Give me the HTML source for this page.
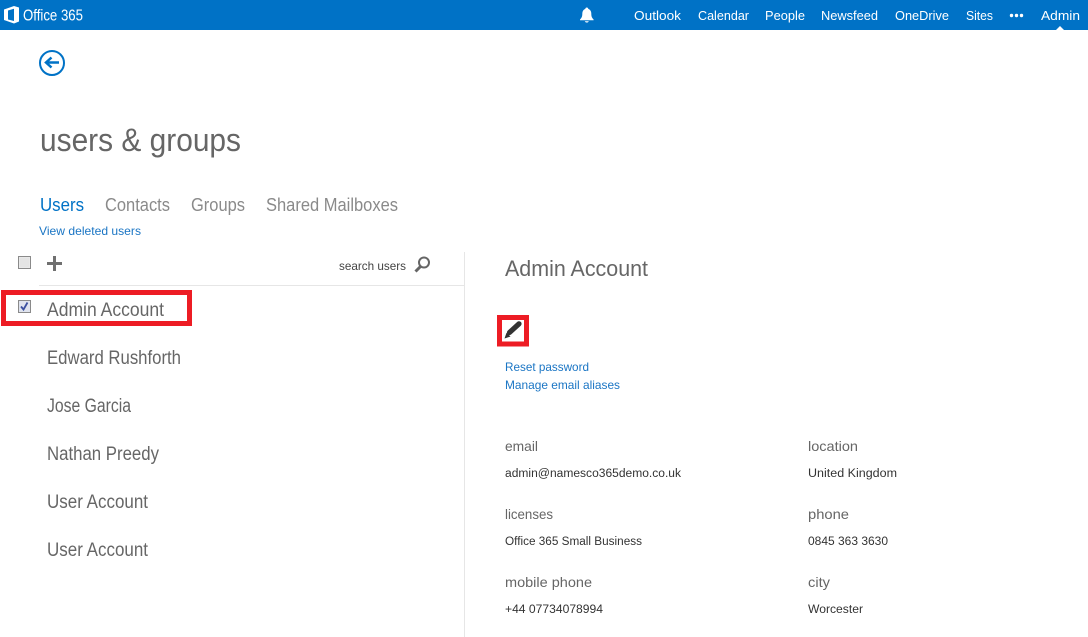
<!DOCTYPE html>
<html><head><meta charset="utf-8"><title>users &amp; groups</title>
<style>
html,body{margin:0;padding:0;background:#fff;width:1088px;height:637px;overflow:hidden}
svg{display:block}
text{font-family:"Liberation Sans",sans-serif}
.n{fill:#fff;font-size:13px}
.u{fill:#8a8a8a;font-size:18px}
.t{fill:#666;font-size:19px}
.l{fill:#1a75c4;font-size:12px}
.h{fill:#666;font-size:14px}
.v{fill:#333;font-size:11.5px}
</style></head><body>
<svg width="1088" height="637" viewBox="0 0 1088 637" xmlns="http://www.w3.org/2000/svg">
<rect width="1088" height="30" fill="#0072c6"/>
<path fill-rule="evenodd" d="M4 9.500L14 6l5 1.500V21.500L14 23.500 4 20ZM8 10.500V19.500L14 21V8.800Z" fill="#fff"/>
<text x="23" y="20.500" fill="#fff" font-size="15.500" textLength="60" lengthAdjust="spacingAndGlyphs">Office 365</text>
<path d="M586.800 7.500c-.9 0-1.400.6-1.500 1.400-2 .7-3 2.500-3 5 0 3-1 4.300-2.300 5.600v.8h13.600v-.8c-1.300-1.300-2.300-2.600-2.300-5.600 0-2.500-1-4.300-3-5-.1-.8-.6-1.400-1.500-1.400zM584.800 21.200c.3.800 1.100 1.300 2 1.300s1.700-.5 2-1.300z" fill="#fff"/>
<text class="n" x="634" y="20" textLength="47" lengthAdjust="spacingAndGlyphs">Outlook</text>
<text class="n" x="698" y="20" textLength="51" lengthAdjust="spacingAndGlyphs">Calendar</text>
<text class="n" x="765" y="20" textLength="40" lengthAdjust="spacingAndGlyphs">People</text>
<text class="n" x="821" y="20" textLength="57" lengthAdjust="spacingAndGlyphs">Newsfeed</text>
<text class="n" x="895" y="20" textLength="54" lengthAdjust="spacingAndGlyphs">OneDrive</text>
<text class="n" x="966" y="20" textLength="27" lengthAdjust="spacingAndGlyphs">Sites</text>
<circle cx="1011.500" cy="15.500" r="1.700" fill="#fff"/><circle cx="1016.500" cy="15.500" r="1.700" fill="#fff"/><circle cx="1021.500" cy="15.500" r="1.700" fill="#fff"/>
<text class="n" x="1041" y="20" textLength="39" lengthAdjust="spacingAndGlyphs">Admin</text>
<path d="M1056 30l4-4 4 4z" fill="#fff"/>

<circle cx="52" cy="63" r="12" fill="none" stroke="#0072c6" stroke-width="2"/>
<path d="M59 62.500H47M51.500 57.500L46 62.500l5.500 5" fill="none" stroke="#0072c6" stroke-width="2.500"/>

<text x="40" y="151" fill="#666" font-size="32" textLength="201" lengthAdjust="spacingAndGlyphs">users &amp; groups</text>
<text x="40" y="211" fill="#0072c6" font-size="18" textLength="44" lengthAdjust="spacingAndGlyphs">Users</text>
<text class="u" x="105" y="211" textLength="65" lengthAdjust="spacingAndGlyphs">Contacts</text>
<text class="u" x="191" y="211" textLength="54" lengthAdjust="spacingAndGlyphs">Groups</text>
<text class="u" x="266" y="211" textLength="132" lengthAdjust="spacingAndGlyphs">Shared Mailboxes</text>
<text class="l" x="39" y="235" textLength="102" lengthAdjust="spacingAndGlyphs">View deleted users</text>

<rect x="18.500" y="256.500" width="12" height="12" fill="#e9e9e9" stroke="#8a8a8a"/>
<rect x="20" y="258" width="9" height="9" fill="#e4e4e4"/>
<path d="M47 263.500H62M54.500 256V271" stroke="#707070" stroke-width="3"/>
<text x="339" y="270" fill="#444" font-size="12" textLength="67" lengthAdjust="spacingAndGlyphs">search users</text>
<circle cx="424" cy="262.500" r="5" fill="none" stroke="#666" stroke-width="2"/>
<path d="M420.500 266.500L415.500 271.500" stroke="#666" stroke-width="3"/>
<rect x="39" y="285" width="425" height="1" fill="#e6e6e6"/>
<rect x="464" y="252" width="1" height="385" fill="#e6e6e6"/>

<rect x="3.500" y="292.500" width="186" height="31" fill="none" stroke="#ed1c24" stroke-width="5"/>
<rect x="18.500" y="300.500" width="12" height="12" fill="#dfe3ee" stroke="#8a8a8a"/>
<path d="M21 306.500l2.500 3 4-7" fill="none" stroke="#3b4fa0" stroke-width="1.800"/>
<text class="t" x="47" y="316" textLength="117" lengthAdjust="spacingAndGlyphs">Admin Account</text>
<text class="t" x="47" y="364" textLength="134" lengthAdjust="spacingAndGlyphs">Edward Rushforth</text>
<text class="t" x="47" y="412" textLength="84" lengthAdjust="spacingAndGlyphs">Jose Garcia</text>
<text class="t" x="47" y="460" textLength="112" lengthAdjust="spacingAndGlyphs">Nathan Preedy</text>
<text class="t" x="47" y="508" textLength="101" lengthAdjust="spacingAndGlyphs">User Account</text>
<text class="t" x="47" y="556" textLength="101" lengthAdjust="spacingAndGlyphs">User Account</text>

<text x="505" y="276" fill="#666" font-size="22" textLength="143" lengthAdjust="spacingAndGlyphs">Admin Account</text>
<rect x="499.500" y="317.500" width="27" height="26.500" fill="none" stroke="#ed1c24" stroke-width="5"/>
<path d="M509.500 332.500L519 323.800" stroke="#333" stroke-width="5.200" stroke-linecap="round" fill="none"/>
<path d="M506.500 332.700L510.500 336.500 504.500 338.500Z" fill="#333"/>
<text class="l" x="505" y="371" textLength="84" lengthAdjust="spacingAndGlyphs">Reset password</text>
<text class="l" x="505" y="389" textLength="115" lengthAdjust="spacingAndGlyphs">Manage email aliases</text>

<text class="h" x="505" y="451" textLength="33" lengthAdjust="spacingAndGlyphs">email</text>
<text class="v" x="505" y="477" textLength="176" lengthAdjust="spacingAndGlyphs">admin@namesco365demo.co.uk</text>
<text class="h" x="808" y="451" textLength="50" lengthAdjust="spacingAndGlyphs">location</text>
<text class="v" x="808" y="477" textLength="89" lengthAdjust="spacingAndGlyphs">United Kingdom</text>
<text class="h" x="505" y="519" textLength="48" lengthAdjust="spacingAndGlyphs">licenses</text>
<text class="v" x="505" y="545" textLength="137" lengthAdjust="spacingAndGlyphs">Office 365 Small Business</text>
<text class="h" x="808" y="519" textLength="41" lengthAdjust="spacingAndGlyphs">phone</text>
<text class="v" x="808" y="545" textLength="80" lengthAdjust="spacingAndGlyphs">0845 363 3630</text>
<text class="h" x="505" y="587" textLength="87" lengthAdjust="spacingAndGlyphs">mobile phone</text>
<text class="v" x="505" y="613" textLength="98" lengthAdjust="spacingAndGlyphs">+44 07734078994</text>
<text class="h" x="808" y="587" textLength="22" lengthAdjust="spacingAndGlyphs">city</text>
<text class="v" x="808" y="613" textLength="55" lengthAdjust="spacingAndGlyphs">Worcester</text>
</svg>
</body></html>
